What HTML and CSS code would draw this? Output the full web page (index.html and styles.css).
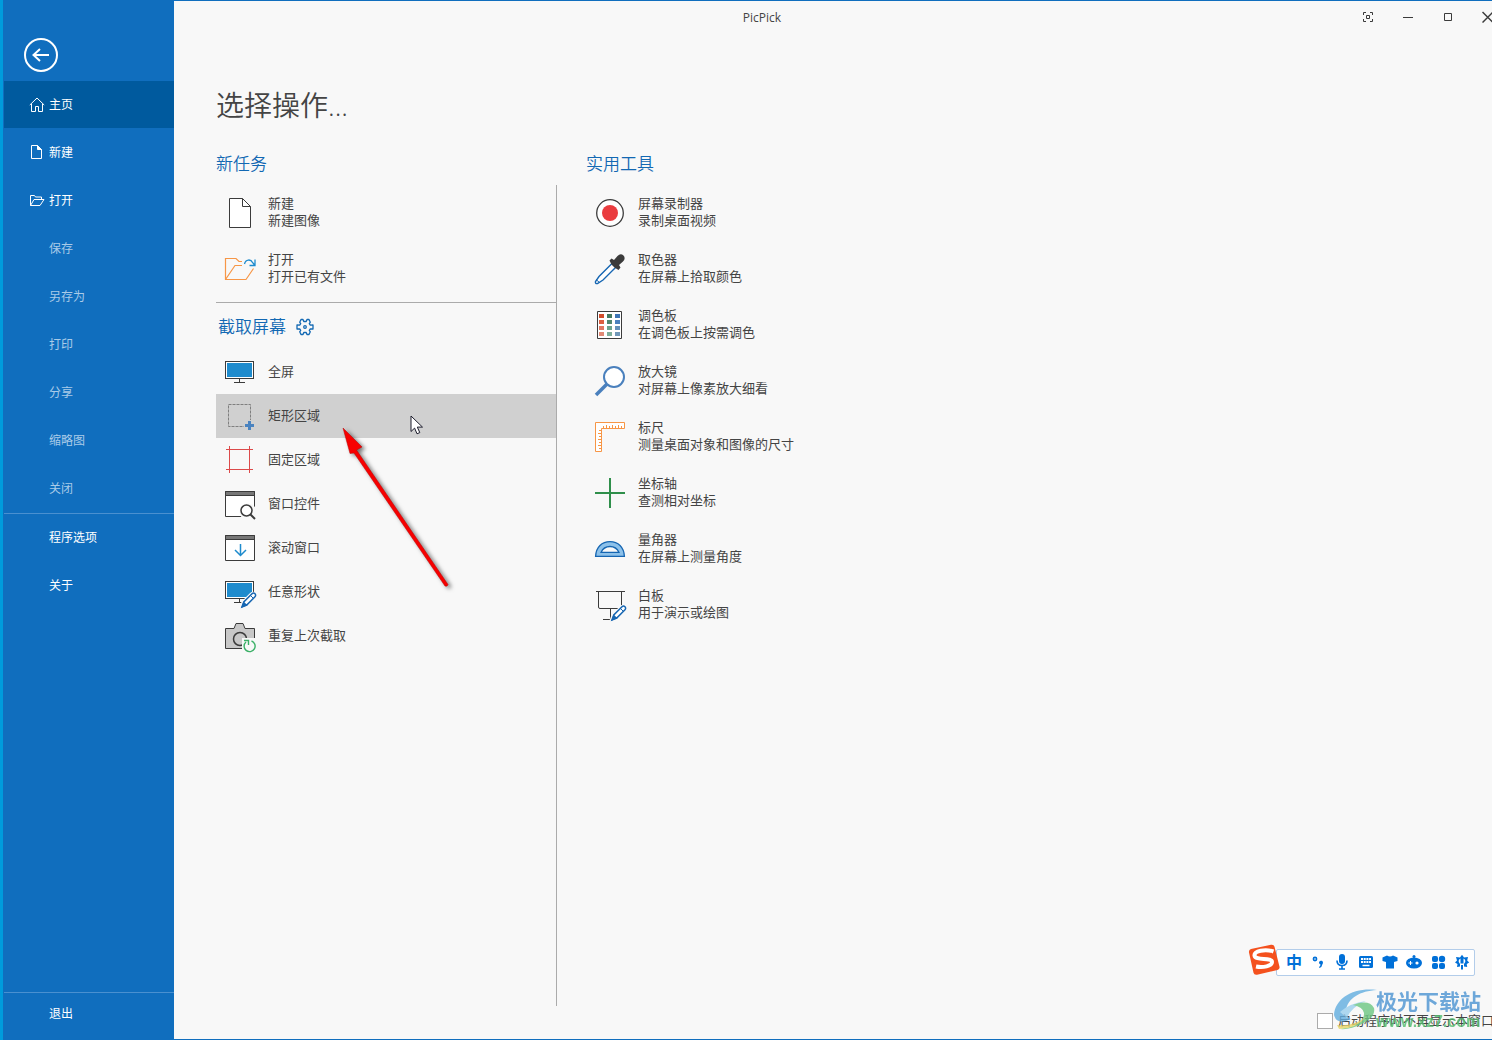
FILE: index.html
```html
<!DOCTYPE html>
<html lang="zh-CN">
<head>
<meta charset="utf-8">
<title>PicPick</title>
<link rel="stylesheet" href="styles.css">
</head>
<body>
<svg class="defs" aria-hidden="true">
  <defs>
    <g id="monitor">
      <rect x="1.5" y="5.5" width="28" height="17" fill="#fff" stroke="#3b3b3b"/>
      <rect x="3" y="7" width="25" height="14" fill="#1e8bcd"/>
      <path d="M15.5 23v3.500M10 26.500h11" fill="none" stroke="#3b3b3b"/>
    </g>
    <g id="pencil">
      <path d="M16 33l2.500-7L27 17.500q2-1.500 4 .5t.5 4L23 30z" fill="#f8f8f8" stroke="#f8f8f8" stroke-width="2"/>
      <path d="M18 31l1.800-5L28 17.700a1.900 1.900 0 0 1 3 3L22.700 29z" fill="#fff" stroke="#1666b2" stroke-width="1.500"/>
      <path d="M17 32l2.500-6.500 4 3.800z" fill="#1666b2"/>
      <path d="M26.500 19.500l2.700 2.700" stroke="#1666b2"/>
    </g>
  </defs>
</svg>

<aside class="sidebar">
  <button class="back" aria-label="返回">
    <svg width="34" height="34" viewBox="0 0 34 34" fill="none" stroke="#fff" stroke-width="2"><circle cx="17" cy="17" r="16"/><path d="M25 17H10M16 11l-6.500 6L16 23"/></svg>
  </button>
  <nav class="menu">
    <button class="menu-item active"><svg width="16" height="16" viewBox="0 0 16 16" fill="none" stroke="#fff"><path d="M.8 8L8 1l7.200 7M2.500 7v7.500h4v-5h3v5h4V7"/></svg>主页</button>
    <button class="menu-item"><svg width="16" height="16" viewBox="0 0 16 16" fill="none" stroke="#fff"><path d="M2.500 1.500h6l4 4v9h-10z"/><path d="M8.500 1.500v4h4z" fill="#fff"/></svg>新建</button>
    <button class="menu-item"><svg width="16" height="16" viewBox="0 0 16 16" fill="none" stroke="#fff"><path d="M1.500 13.500v-10h4l1 1.500h6v2M1.500 13.500l3.500-6h10l-4 6z"/></svg>打开</button>
    <button class="menu-item" disabled>保存</button>
    <button class="menu-item" disabled>另存为</button>
    <button class="menu-item" disabled>打印</button>
    <button class="menu-item" disabled>分享</button>
    <button class="menu-item" disabled>缩略图</button>
    <button class="menu-item" disabled>关闭</button>
  </nav>
  <nav class="menu extra">
    <button class="menu-item">程序选项</button>
    <button class="menu-item">关于</button>
  </nav>
  <nav class="menu exit">
    <button class="menu-item">退出</button>
  </nav>
</aside>

<main class="window">
  <header class="titlebar">
    <span class="title">PicPick</span>
    <div class="controls">
      <button aria-label="截取"><svg width="12" height="12" viewBox="0 0 12 12"><path d="M1.500 4V1.500H4M8 1.500h2.500V4M10.500 8v2.500H8M4 10.500H1.500V8M4.500 4.500h3v3h-3z"/></svg></button>
      <button aria-label="最小化"><svg width="12" height="12" viewBox="0 0 12 12"><path d="M1 6.500h10"/></svg></button>
      <button aria-label="最大化"><svg width="12" height="12" viewBox="0 0 12 12"><path d="M2.500 2.500h7v7h-7z"/></svg></button>
      <button aria-label="关闭窗口"><svg width="12" height="12" viewBox="0 0 12 12"><path d="M.5 1l10.500 10.500M11 1L.5 11.500" stroke-width="1.500"/></svg></button>
    </div>
  </header>

  <div class="content">
    <h1>选择操作...</h1>
    <div class="columns">
      <h2>新任务</h2>
      <h2>实用工具</h2>
      <div class="tasks">
        <section class="group new-tasks">
          <button class="item tall"><svg class="icon" viewBox="0 0 32 32"><path d="M5.500 1.500h13l8 8v21h-21z" fill="#fff" stroke="#3b3b3b"/><path d="M18.500 1.500v8h8" fill="none" stroke="#3b3b3b"/></svg><span>新建<br>新建图像</span></button>
          <button class="item tall"><svg class="icon" viewBox="0 0 32 32" fill="none"><path d="M18 8.500h-3L12 5.500H1.500v21H22l7.500-11M1.500 26.500l9.500-14h7" stroke="#f79646" stroke-width="1.200"/><path d="M20.500 11c1-5 6.500-5 8-1.500l2.500 3M31 6.500v6h-5.500" stroke="#1e8bcd" stroke-width="1.300"/></svg><span>打开<br>打开已有文件</span></button>
        </section>
        <section class="capture">
          <h2>截取屏幕 <button class="gear" aria-label="截取设置"><svg width="18" height="18" viewBox="0 0 18 18" fill="none" stroke="#1268b3" stroke-width="1.300" stroke-linejoin="round"><path d="M5 1.500h2L7.800 3.500h2.400L11 1.500h2l1.300 2.700-1 1.500 1 1.500 2.700-.2v4l-2.700-.2-1 1.500 1 1.500L13 16.500h-2l-.8-2H7.800l-.8 2H5l-1.300-2.700 1-1.500-1-1.500L1 11V7l2.700.2 1-1.500-1-1.500z"/><circle cx="9" cy="9" r="1.300"/></svg></button></h2>
          <button class="item"><svg class="icon" viewBox="0 0 32 32"><use href="#monitor"/></svg><span>全屏</span></button>
          <button class="item selected"><svg class="icon" viewBox="0 0 32 32"><rect x="4.500" y="4.500" width="22" height="22" fill="none" stroke="#7f7f7f" stroke-dasharray="3 1"/><path d="M20 20h8v8h-8z" fill="#d0d0d0"/><path d="M25.500 21v9M21 25.500h9" stroke="#4a83c0" stroke-width="3"/></svg><span>矩形区域</span></button>
          <button class="item"><svg class="icon" viewBox="0 0 32 32"><path d="M5.500 2v27M25.500 2v27M2 5.500h27M2 25.500h27" stroke="#dc4a4a" fill="none"/></svg><span>固定区域</span></button>
          <button class="item"><svg class="icon" viewBox="0 0 32 32"><path d="M1.500 3.500h29v25h-29z" fill="#fff" stroke="#3b3b3b"/><path d="M1.500 3.500h29v4h-29z" fill="#777" stroke="#3b3b3b"/><circle cx="24" cy="24" r="8.500" fill="#f8f8f8"/><circle cx="22.500" cy="22.500" r="5.500" fill="#fff" stroke="#3b3b3b" stroke-width="1.500"/><path d="M26.500 26.500l4.500 4.500" stroke="#3b3b3b" stroke-width="2"/></svg><span>窗口控件</span></button>
          <button class="item"><svg class="icon" viewBox="0 0 32 32"><path d="M1.500 3.500h29v25h-29z" fill="#fff" stroke="#3b3b3b"/><path d="M1.500 3.500h29v4h-29z" fill="#777" stroke="#3b3b3b"/><path d="M16.500 12v11.500M11 18l5.500 5.500L22 18" fill="none" stroke="#1e8bcd" stroke-width="1.500"/></svg><span>滚动窗口</span></button>
          <button class="item"><svg class="icon" viewBox="0 0 32 32"><use href="#monitor"/><use href="#pencil"/></svg><span>任意形状</span></button>
          <button class="item"><svg class="icon" viewBox="0 0 32 32"><path d="M1.500 8.500H10l2-5h7l2 5h9.500v20h-29z" fill="#c8c8c8" stroke="#3b3b3b"/><circle cx="16" cy="19" r="6.500" fill="none" stroke="#3b3b3b" stroke-width="1.500"/><path d="M18 18h15v15H18z" fill="#f8f8f8"/><path d="M27.500 21a5.500 5.500 0 1 1-5.500 1M20 20.500h4.500V25" fill="none" stroke="#3bb067" stroke-width="1.400"/></svg><span>重复上次截取</span></button>
        </section>
      </div>
      <div class="tools">
        <button class="item tall"><svg class="icon" viewBox="0 0 32 32"><circle cx="16" cy="16" r="13.300" fill="#fff" stroke="#3b3b3b" stroke-width="1.300"/><circle cx="16" cy="16" r="8" fill="#ea3c3f"/></svg><span>屏幕录制器<br>录制桌面视频</span></button>
        <button class="item tall"><svg class="icon" viewBox="0 0 32 32"><path d="M18 10.500L5 23.500 1.500 28.500q-.5 2.500 2 2L9 27 22 14z" fill="#fff" stroke="#1666b2" stroke-width="1.400"/><path d="M2 26.500l3.500 3" stroke="#1666b2"/><path d="M15.500 7.500l2-2 2.500 1.500 3.500-4q3-3 6-.5 2.500 3-.5 6L25 12l1.500 2.500-2 2.500-4-2.500-3-3z" fill="#3b3b3b"/></svg><span>取色器<br>在屏幕上拾取颜色</span></button>
        <button class="item tall"><svg class="icon" viewBox="0 0 32 32"><path d="M3.500 2.500h24v27h-24z" fill="#fff" stroke="#3b3b3b"/><path d="M5 5h5v4H5z" fill="#d24d2c"/><path d="M5 11h5v4H5z" fill="#dd5e40"/><path d="M5 17h5v4H5z" fill="#e17762"/><path d="M5 23h5v4H5z" fill="#e08a76"/><path d="M13 5h5v4h-5z" fill="#437a60"/><path d="M13 11h5v4h-5z" fill="#518670"/><path d="M13 17h5v4h-5z" fill="#6ba38d"/><path d="M13 23h5v4h-5z" fill="#7cae9b"/><path d="M21 5h5v4h-5z" fill="#3e75b5"/><path d="M21 11h5v4h-5z" fill="#4a80bd"/><path d="M21 17h5v4h-5z" fill="#6390b9"/><path d="M21 23h5v4h-5z" fill="#7198b9"/></svg><span>调色板<br>在调色板上按需调色</span></button>
        <button class="item tall"><svg class="icon" viewBox="0 0 32 32"><circle cx="20" cy="12" r="10" fill="#fff" stroke="#4a80bd" stroke-width="2"/><path d="M13 19L2 30" stroke="#4a80bd" stroke-width="3.500"/></svg><span>放大镜<br>对屏幕上像素放大细看</span></button>
        <button class="item tall"><svg class="icon" viewBox="0 0 32 32"><path d="M1.500 1.500h29v6h-23v23h-6z" fill="#fff" stroke="#f79646"/><path d="M9.500 7V5M12.500 7V4M15.500 7V5M18.500 7V4M21.500 7V5M24.500 7V4M27.500 7V5M7 9.500H5M7 12.500H4M7 15.500H5M7 18.500H4M7 21.500H5M7 24.500H4M7 27.500H5" stroke="#f79646"/></svg><span>标尺<br>测量桌面对象和图像的尺寸</span></button>
        <button class="item tall"><svg class="icon" viewBox="0 0 32 32"><path d="M16 1v30M1 16h30" stroke="#2f8f4b" stroke-width="2"/></svg><span>坐标轴<br>查测相对坐标</span></button>
        <button class="item tall"><svg class="icon" viewBox="0 0 32 32"><path d="M1.600 23.400C2 14 8 8.600 16 8.600S30 14 30.400 23.400zM7 19.400h18C23 15 20 13.500 16 13.500S9 15 7 19.400z" fill="#8cc1ea" fill-rule="evenodd" stroke="#1666b2" stroke-width="1.300"/></svg><span>量角器<br>在屏幕上测量角度</span></button>
        <button class="item tall"><svg class="icon" viewBox="0 0 32 32"><path d="M4.500 2.500V18q0 1.500 1.500 1.500h20q1.500 0 1.500-1.500V2.500M2 2.500h29M16.500 20v10.500M9 30.500h8" fill="none" stroke="#3b3b3b"/><use href="#pencil"/></svg><span>白板<br>用于演示或绘图</span></button>
      </div>
    </div>
  </div>

  <footer class="footer">
    <input type="checkbox" id="hide-start"><label for="hide-start">启动程序时不再显示本窗口</label>
  </footer>
</main>

<svg class="pointer" width="14" height="20" viewBox="0 0 14 20"><path d="M1 1v15.500l3.600-3.400L7 18.800l2.800-1.200-2.500-5.500h5.200z" fill="#fff" stroke="#1c1c2c"/></svg>
<svg class="arrow" width="118" height="168" viewBox="0 0 118 168"><path d="M2 0l19 19-5.500 3L107 156.500q-.5 2.500-3 1.500L13 25l-4 .5z" fill="#f70000" stroke="#b80000" stroke-width=".5"/></svg>

<div class="ime">
  <svg class="ime-logo" width="32" height="32" viewBox="0 0 32 32"><path d="M3 5L23 .8q2.800-.6 3.500 2l5 20q.5 2.500-2 3.200L9 30.700q-2.800.6-3.500-2L1 8.500Q.6 5.700 3 5z" fill="#f4511e"/><path d="M25.500 7.500C17 4.500 6 7 6.500 11.500c.5 5.500 17.500 1.500 17.500 6.500 0 4-9 6-16 4.500" fill="none" stroke="#fff" stroke-width="4"/></svg>
  <div class="ime-bar">
    <button class="ime-lang">中</button>
    <button aria-label="标点"><svg width="16" height="16" viewBox="0 0 16 16"><circle cx="5" cy="5" r="1.600" fill="none" stroke="#0070d8" stroke-width="1.600"/><path d="M9 8.500a2 2 0 1 1 3.500 1.500q-.5 3-3 4l-.5-1q1.500-1 1.500-2.500Q9 10 9 8.500z"/></svg></button>
    <button aria-label="语音"><svg width="16" height="16" viewBox="0 0 16 16"><rect x="5" y="0" width="6" height="10" rx="3"/><path d="M3 6.500q0 5 5 5t5-5M8 11v4M5 15h6" fill="none" stroke="#0070d8" stroke-width="1.600"/></svg></button>
    <button aria-label="键盘"><svg width="16" height="16" viewBox="0 0 16 16"><rect x="1" y="2" width="14" height="12" rx="1.500"/><path d="M3 5h10M3 8h10" stroke="#fff" stroke-width="1.800" stroke-dasharray="2 .7"/><path d="M4.500 11.500h7" stroke="#fff" stroke-width="1.500"/></svg></button>
    <button aria-label="皮肤"><svg width="16" height="16" viewBox="0 0 16 16"><path d="M5 1.500q3 2 6 0l4.500 2V7L12 8v6.500H4V8L.5 7V3.500z"/></svg></button>
    <button aria-label="游戏"><svg width="16" height="16" viewBox="0 0 16 16"><circle cx="8" cy="2.500" r="1.500"/><ellipse cx="8" cy="9" rx="8" ry="5.500"/><path d="M2.500 9h4M4.500 7v4" stroke="#fff"/><circle cx="11" cy="9" r="1.600" fill="#fff"/></svg></button>
    <button aria-label="工具箱"><svg width="16" height="16" viewBox="0 0 16 16"><rect x="2" y="2" width="6" height="6" rx="2"/><circle cx="12" cy="5" r="3.200"/><rect x="2" y="9" width="6" height="6" rx="2"/><rect x="9" y="9" width="6" height="6" rx="2"/></svg></button>
    <button aria-label="设置"><svg width="16" height="16" viewBox="0 0 16 16"><path d="M8 .8l2 2.700 4-.5-.8 3.500 2 2-2.500 1.500.5 3-3.200-.5v-2.500q3-3.500-.5-5.500v5H6.500v-5q-3.500 2-.5 5.500v2.500L3 13l.5-3L1 8.500l2-2L2 3l4 .5zM7 11h2v4.500H7z"/></svg></button>
  </div>
</div>

<div class="watermark">
  <svg width="48" height="42" viewBox="0 0 48 42"><path d="M1 26C2 9 21-2 44 1 27 2 15 9 13 21q-1 7 5 9Q4 37 1 26z" fill="#62aee0"/><path d="M7 23q10-9 26-11Q18 18 14 29z" fill="#9bd0ee"/><path d="M20 16q16-6 21 3 2 9-12 16-12 6-22 5 25-5 24-16-1-6-11-8z" fill="#6cc782"/><path d="M4 36q16 2 29-8Q23 40 6 40z" fill="#e9d667"/></svg>
  <div class="watermark-text"><b>极光下载站</b><span>www.xz7.com</span></div>
</div>
</body>
</html>
```
FILE: styles.css
```css
* { box-sizing: border-box; }

body {
  position: relative;
  display: flex;
  min-height: 100vh;
  margin: 0;
  padding-left: 3px;
  overflow: hidden;
  background: #009bdc;
  color: #444;
  font: 400 13px/17px "Open Sans", "Noto Sans CJK SC", sans-serif;
}

button {
  padding: 0;
  border: 0;
  background: none;
  color: inherit;
  font: inherit;
  text-align: left;
}

svg { flex: none; display: block; }
.defs { position: absolute; width: 0; height: 0; }

/* Sidebar */
.sidebar {
  flex: none;
  display: flex;
  flex-direction: column;
  width: 171px;
  padding: 38px 0 6px 1px;
  background: #106ebe;
  color: #fff;
  font-size: 12px;
}
.back { align-self: flex-start; margin: 0 0 9px 20px; border-radius: 50%; }
.menu { display: flex; flex-direction: column; }
.menu-item {
  display: flex;
  align-items: center;
  gap: 4px;
  height: 48px;
  padding-left: 45px;
}
.menu-item:has(svg) { padding-left: 25px; }
.menu-item.active { height: 47px; background: #005a9e; }
.menu-item:disabled { color: #a9cbe8; }
.extra, .exit { border-top: 1px solid #4a90d0; }
.extra { margin-top: 1px; }
.extra .menu-item { padding-bottom: 2px; }
.exit { margin-top: auto; }
.exit .menu-item { height: 41px; }

/* Window */
.window {
  flex: 1;
  display: flex;
  flex-direction: column;
  min-width: 0;
  overflow: hidden;
  border: solid #106ebe;
  border-width: 1px 0;
  background: #f8f8f8;
}
.titlebar { display: flex; align-items: center; height: 32px; }
.title { flex: 1; padding-left: 2px; font-size: 12px; text-align: center; }
.controls { flex: none; display: flex; margin-right: -16px; }
.controls button { display: flex; justify-content: center; width: 40px; }
.controls svg { fill: none; stroke: #3b3b3b; }

.content {
  flex: 1;
  display: flex;
  flex-direction: column;
  padding: 52px 42px 0;
}
h1 { margin: 0 0 27px; font-size: 28px; line-height: 40px; font-weight: 350; }
h2 {
  margin: 0 0 9px;
  color: #1268b3;
  font-size: 17px;
  line-height: 24px;
  font-weight: 350;
}
.columns {
  flex: 1;
  display: grid;
  grid-template-columns: 341px 1fr;
  grid-template-rows: auto 1fr;
  column-gap: 29px;
}
.tasks { border-right: 1px solid #ababab; }
.new-tasks { padding-bottom: 5px; border-bottom: 1px solid #ababab; }
.capture h2 { display: flex; align-items: center; gap: 10px; margin: 0; padding: 12px 0 11px 2px; }
.item {
  display: flex;
  align-items: center;
  gap: 12px;
  width: 100%;
  height: 44px;
  padding: 0 8px;
}
.item span { padding-bottom: 2px; }
.item.tall { height: 56px; }
.item.selected { background: #d0d0d0; }
.icon { width: 32px; height: 32px; overflow: visible; }

.footer {
  display: flex;
  justify-content: flex-end;
  align-items: center;
  gap: 5px;
  height: 33px;
  margin-right: -2px;
  padding-bottom: 4px;
  white-space: nowrap;
}
.footer input {
  appearance: none;
  width: 16px;
  height: 16px;
  margin: 0;
  border: 1px solid #ababab;
  background: #fff;
}

/* Overlays */
.pointer { position: absolute; left: 410px; top: 415px; }
.arrow { position: absolute; left: 341px; top: 428px; filter: drop-shadow(3px 2px 2px #0008); }

.ime { position: absolute; right: 17px; bottom: 60px; display: flex; align-items: center; }
.ime-logo { z-index: 1; margin: 0 -4px 4px 0; }
.ime-bar {
  display: flex;
  height: 27px;
  padding: 0 0 0 5px;
  border: 1px solid #b3cdea;
  border-radius: 2px;
  background: #fff;
}
.ime-bar button { display: flex; align-items: center; justify-content: center; width: 24px; color: #0070d8; }
.ime-bar svg { fill: #0070d8; }
.ime-bar .ime-lang { font-size: 16px; font-weight: 700; }

.watermark { position: absolute; right: 11px; bottom: 9px; display: flex; opacity: 0.8; pointer-events: none; }
.watermark-text { display: flex; flex-direction: column; margin-left: -5px; }
.watermark b { color: #4b93d2; font-size: 21px; line-height: 24px; font-weight: 700; }
.watermark span { color: #55bd70; font: bold 16px/18px "Liberation Sans", sans-serif; }
```
